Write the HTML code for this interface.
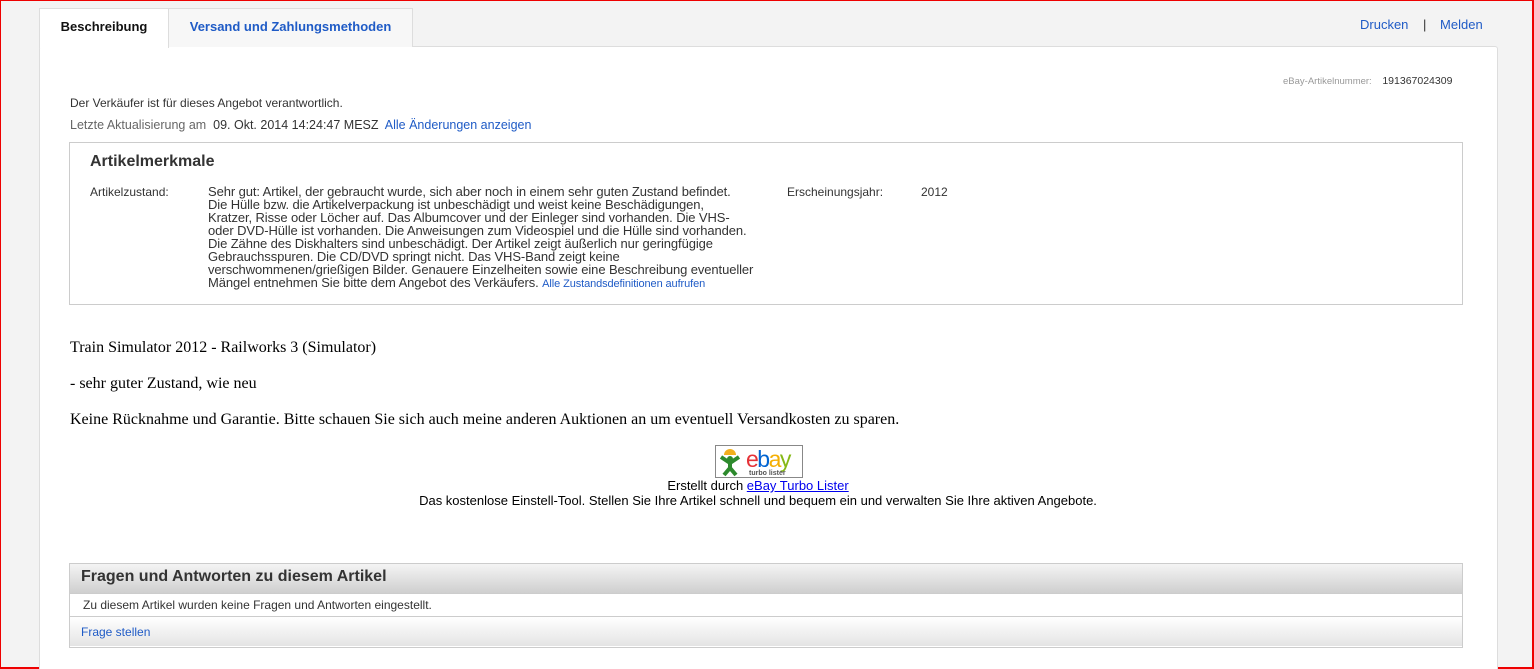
<!DOCTYPE html>
<html><head><meta charset="utf-8"><style>
*{margin:0;padding:0;box-sizing:border-box}
html,body{width:1534px;height:669px;overflow:hidden}
body{background:#f3f3f3;font-family:"Liberation Sans",Arial,sans-serif;position:relative;border:1px solid #e00;border-right-width:2px;border-bottom-width:2px}
a{text-decoration:none;color:#1f5bc6}
.abs{position:absolute}
.tab{position:absolute;top:7px;height:39px;border:1px solid #ddd;border-bottom:none;font-weight:bold;font-size:13px;line-height:36px;text-align:center}
.panel{position:absolute;left:38px;top:45px;width:1459px;height:640px;background:#fff;border:1px solid #ddd;border-radius:3px}
.sm{font-size:12px;color:#333}
.box{position:absolute;left:68px;top:141px;width:1394px;height:163px;border:1px solid #ccc}
.cond{position:absolute;left:207px;top:184px;font-size:13px;line-height:13px;color:#333;letter-spacing:-0.1px}
.ser{font-family:"Liberation Serif","Times New Roman",serif;font-size:16px;color:#000;position:absolute;left:69px}
.qa{position:absolute;left:68px;top:562px;width:1394px;height:85px;border:1px solid #ccc}
</style></head><body>
<div class="panel"></div>
<div class="tab" style="left:38px;width:130px;background:#fff;height:40px;color:#111">Beschreibung</div>
<div class="tab" style="left:167px;width:245px;background:#f7f7f7;color:#1f5bc6">Versand und Zahlungsmethoden</div>
<div class="abs" style="left:1359px;top:16px;font-size:13px;color:#1f5bc6">Drucken <span style="color:#333;margin:0 10px 0 11px">|</span> Melden</div>
<div class="abs" style="left:1282px;top:74px;font-size:9.5px;color:#999">eBay-Artikelnummer: <span style="color:#333;margin-left:8px;font-size:10.5px">191367024309</span></div>
<div class="abs sm" style="left:69px;top:95px">Der Verkäufer ist für dieses Angebot verantwortlich.</div>
<div class="abs" style="left:69px;top:117px;font-size:12.5px;color:#666">Letzte Aktualisierung am &nbsp;<span style="color:#333">09. Okt. 2014 14:24:47 MESZ</span>&nbsp; <a>Alle Änderungen anzeigen</a></div>
<div class="box"></div>
<div class="abs" style="left:89px;top:152px;font-size:16px;font-weight:bold;color:#333">Artikelmerkmale</div>
<div class="abs" style="left:89px;top:184px;font-size:12px;color:#333">Artikelzustand:</div>
<div class="cond">Sehr gut: Artikel, der gebraucht wurde, sich aber noch in einem sehr guten Zustand befindet.<br>Die Hülle bzw. die Artikelverpackung ist unbeschädigt und weist keine Beschädigungen,<br>Kratzer, Risse oder Löcher auf. Das Albumcover und der Einleger sind vorhanden. Die VHS-<br>oder DVD-Hülle ist vorhanden. Die Anweisungen zum Videospiel und die Hülle sind vorhanden.<br>Die Zähne des Diskhalters sind unbeschädigt. Der Artikel zeigt äußerlich nur geringfügige<br>Gebrauchsspuren. Die CD/DVD springt nicht. Das VHS-Band zeigt keine<br>verschwommenen/grießigen Bilder. Genauere Einzelheiten sowie eine Beschreibung eventueller<br>Mängel entnehmen Sie bitte dem Angebot des Verkäufers. <a style="font-size:11px">Alle Zustandsdefinitionen aufrufen</a></div>
<div class="abs" style="left:786px;top:184px;font-size:12px;color:#333">Erscheinungsjahr:</div>
<div class="abs" style="left:920px;top:184px;font-size:12px;color:#333">2012</div>
<div class="ser" style="top:338px">Train Simulator 2012 - Railworks 3 (Simulator)</div>
<div class="ser" style="top:374px">- sehr guter Zustand, wie neu</div>
<div class="ser" style="top:410px">Keine Rücknahme und Garantie. Bitte schauen Sie sich auch meine anderen Auktionen an um eventuell Versandkosten zu sparen.</div>
<div class="abs" style="left:714px;top:444px;width:88px;height:33px;border:1px solid #888;background:#fff">
<svg width="86" height="31" viewBox="0 0 86 31"><path d="M8 9 A6 6 0 0 1 20 9 Z" fill="#f2b01e"/><circle cx="14" cy="13" r="3" fill="#2d8a2d"/><path d="M5 11 L14 17 L23 11 M14 16 L14 23 M8 29 L14 22 L20 29" stroke="#2d8a2d" stroke-width="4" fill="none"/>
<text x="30" y="21" font-family="Liberation Sans" font-size="23" fill="#e53238" letter-spacing="-1.5">e<tspan fill="#0064d2">b</tspan><tspan fill="#f5af02">a</tspan><tspan fill="#86b817">y</tspan></text>
<text x="33" y="29" font-family="Liberation Sans" font-size="7" font-weight="bold" fill="#555">turbo lister</text></svg></div>
<div class="abs" style="left:-10px;width:1534px;top:477px;text-align:center;font-size:13px;color:#000;line-height:15px">Erstellt durch <a style="color:#00e;text-decoration:underline">eBay Turbo Lister</a><br>Das kostenlose Einstell-Tool. Stellen Sie Ihre Artikel schnell und bequem ein und verwalten Sie Ihre aktiven Angebote.</div>
<div class="qa">
<div style="height:30px;background:linear-gradient(#f4f4f4,#cfcfcf);border-bottom:1px solid #ccc;font-size:16px;font-weight:bold;color:#333;padding:4px 0 0 11px">Fragen und Antworten zu diesem Artikel</div>
<div style="height:23px;border-bottom:1px solid #ccc;font-size:12px;color:#333;padding:4px 0 0 13px">Zu diesem Artikel wurden keine Fragen und Antworten eingestellt.</div>
<div style="height:29px;background:linear-gradient(#fff,#e4e4e4);font-size:12px;padding:8px 0 0 11px"><a>Frage stellen</a></div>
</div>
</body></html>
